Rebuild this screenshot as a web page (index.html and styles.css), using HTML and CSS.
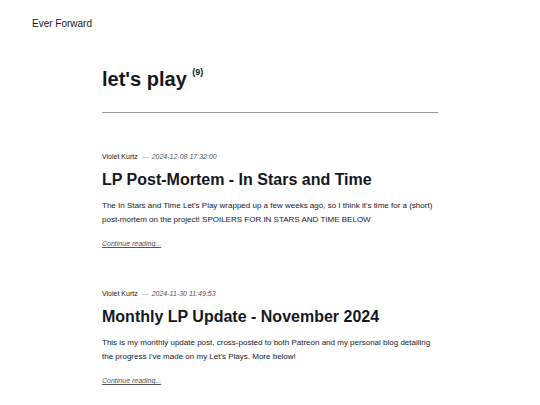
FILE: index.html
```html
<!DOCTYPE html>
<html lang="en">
<head>
    <meta charset="UTF-8">
    <meta name="viewport" content="width=device-width, initial-scale=1.0">
    <title>let's play - Ever Forward</title>
    <link rel="stylesheet" href="styles.css">
</head>
<body>
    <header class="site-header">
        <a class="site-title" href="#">Ever Forward</a>
    </header>

    <main class="container">
        <h1 class="page-title">let's play <sup>(9)</sup></h1>

        <!-- Post list -->
        <article class="post">
            <div class="post-meta">
                <span class="author">Violet Kurtz</span>
                <time datetime="2024-12-08T17:32:00">2024-12-08 17:32:00</time>
            </div>
            <h2><a href="#">LP Post-Mortem - In Stars and Time</a></h2>
            <p>The In Stars and Time Let's Play wrapped up a few weeks ago, so I think it's time for a (short) post-mortem on the project! SPOILERS FOR IN STARS AND TIME BELOW</p>
            <a class="read-more" href="#">Continue reading...</a>
        </article>

        <article class="post">
            <div class="post-meta">
                <span class="author">Violet Kurtz</span>
                <time datetime="2024-11-30T11:49:53">2024-11-30 11:49:53</time>
            </div>
            <h2><a href="#">Monthly LP Update - November 2024</a></h2>
            <p>This is my monthly update post, cross-posted to both Patreon and my personal blog detailing the progress I've made on my Let's Plays. More below!</p>
            <a class="read-more" href="#">Continue reading...</a>
        </article>
    </main>
</body>
</html>
```
FILE: styles.css
```css
body {
    margin: 0;
    background-color: #fff;
    color: #15171f;
    font-family: "Liberation Sans", Arial, sans-serif;
}

a {
    color: inherit;
    text-decoration: none;
}

/* Header */
.site-header {
    padding: 16px 32px;
    font-size: 10px;
    line-height: 16px;
}

/* Content column */
.container {
    max-width: 336px;
    margin: 0 auto;
    padding: 17px 16px 0;
}

.page-title {
    margin: 0 0 37px;
    padding-bottom: 19px;
    border-bottom: 1px solid #999;
    font-size: 20px;
    line-height: 28px;
}

.page-title sup {
    font-size: 9px;
    line-height: 0;
    vertical-align: 11px;
}

/* Posts */
.post {
    margin-bottom: 36px;
}

.post:last-child {
    margin-bottom: 0;
}

.post-meta {
    display: flex;
    align-items: center;
    font-size: 7px;
    line-height: 14px;
}

.post-meta time {
    display: flex;
    align-items: center;
    color: #555;
    font-style: italic;
}

.post-meta time::before {
    content: "";
    width: 7px;
    height: 1px;
    margin: 0 3px 0 4px;
    background-color: #ccc;
}

.post h2 {
    margin: 4px 0 7px;
    font-size: 16px;
    line-height: 24px;
}

.post p {
    margin: 0 0 10px;
    font-size: 8px;
    line-height: 14px;
}

.read-more {
    display: block;
    color: #555;
    font-size: 7px;
    font-style: italic;
    line-height: 14px;
    text-decoration: underline;
}
```
